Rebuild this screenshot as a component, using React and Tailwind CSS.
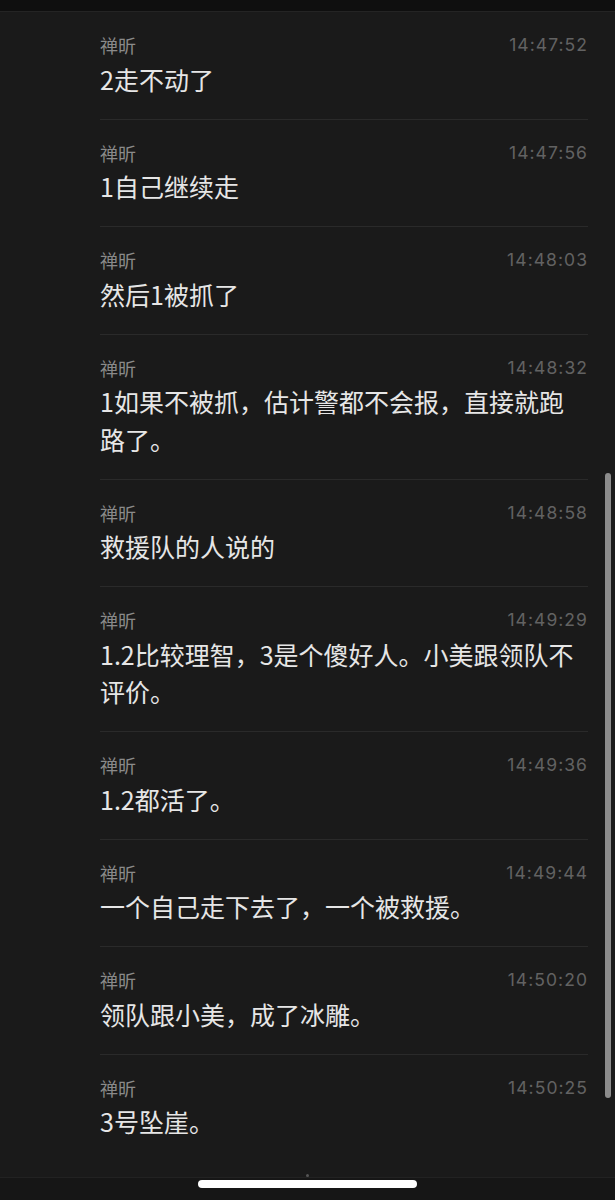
const messages = [
  { time: "14:47:52", text: "2走不动了" },
  { time: "14:47:56", text: "1自己继续走" },
  { time: "14:48:03", text: "然后1被抓了" },
  { time: "14:48:32", text: "1如果不被抓，估计警都不会报，直接就跑路了。" },
  { time: "14:48:58", text: "救援队的人说的" },
  { time: "14:49:29", text: "1.2比较理智，3是个傻好人。小美跟领队不评价。" },
  { time: "14:49:36", text: "1.2都活了。" },
  { time: "14:49:44", text: "一个自己走下去了，一个被救援。" },
  { time: "14:50:20", text: "领队跟小美，成了冰雕。" },
  { time: "14:50:25", text: "3号坠崖。" },
];

export default function App() {
  return (
    <div
      className="relative h-[1200px] w-[615px] overflow-hidden bg-[#1a1a1a] flex flex-col"
      style={{ fontFamily: '"Noto Sans CJK SC", "Noto Sans", sans-serif' }}
    >
      <div className="h-[12px] shrink-0 bg-[#0f0f0f] border-b border-[#242424]" />
      <div className="flex-1 flex flex-col">
        {messages.map((m, i) => (
          <div
            key={i}
            className={
              "ml-[100px] mr-[27px] pt-[21px] pb-[20.5px] " +
              (i < messages.length - 1 ? "border-b border-[#2a2a2a]" : "")
            }
          >
            <div className="flex items-center justify-between h-[24px]">
              <span className="text-[18px] leading-[24px] text-[#8a8a8a]">禅昕</span>
              <span className="font-['Inter'] text-[17.5px] leading-[24px] tracking-[0.06em] text-[#626262]">
                {m.time}
              </span>
            </div>
            <div className="mt-[3.5px] w-[480px] text-[25px] leading-[37.5px] text-[#e6e6e6]">
              {m.text}
            </div>
          </div>
        ))}
      </div>
      <div className="h-[23px] shrink-0 bg-[#161616] border-t border-[#222] flex justify-center pt-[2px]">
        <div className="h-[8px] w-[219px] rounded-full bg-white" />
      </div>
      <div className="absolute left-[306px] top-[1174px] h-[3px] w-[3px] rounded-full bg-[#555]" />
      <div className="absolute left-[605px] top-[473px] h-[625px] w-[6px] rounded-full bg-[#8c8c8c]" />
    </div>
  );
}
